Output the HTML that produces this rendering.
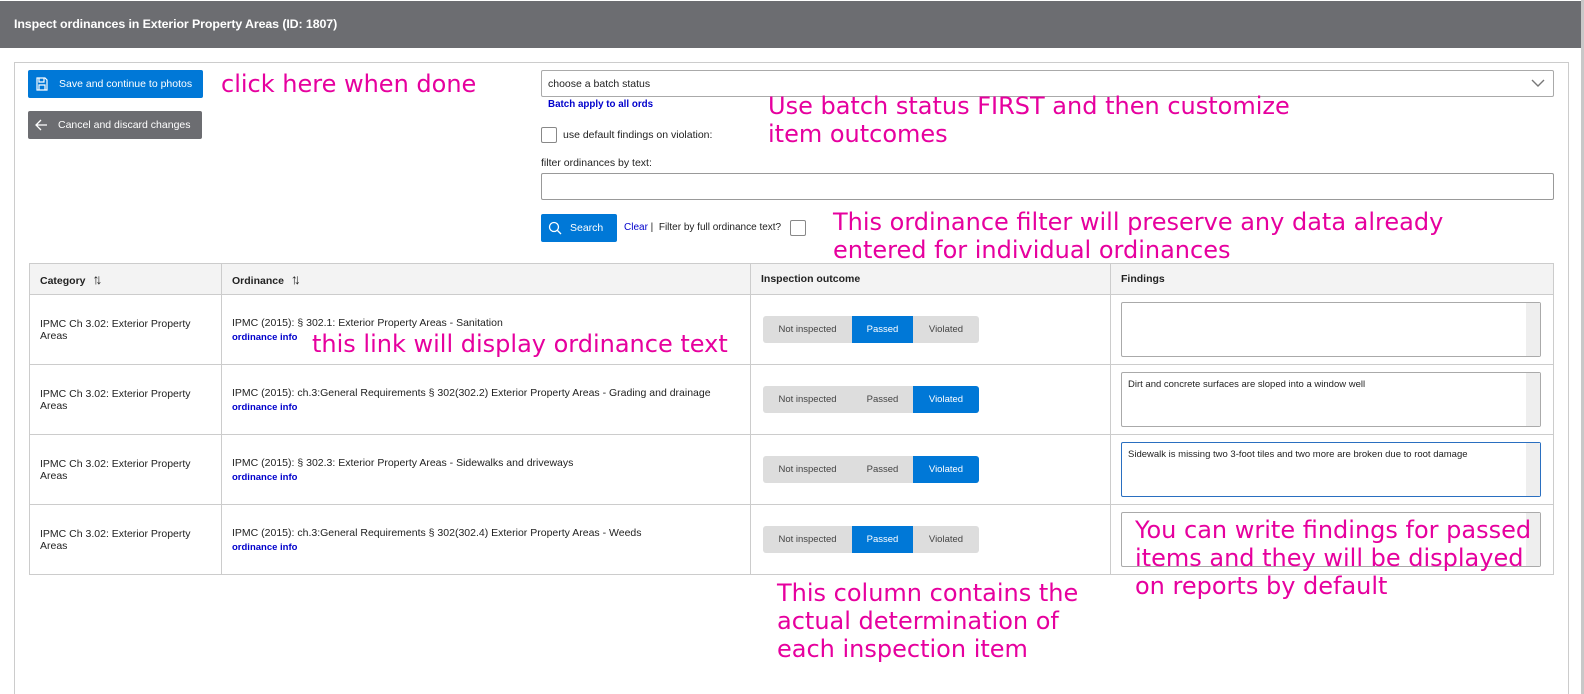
<!DOCTYPE html>
<html><head><style>
*{box-sizing:border-box;margin:0;padding:0}
html,body{overflow:hidden;width:1584px;height:694px;margin:0}
body{background:#fff;font-family:"Liberation Sans",sans-serif;font-size:10.5px;color:#222}
#w{position:relative;width:1584px;height:694px;overflow:hidden}
.abs{position:absolute}
.hdr{left:0;top:1px;width:1584px;height:47px;background:#6c6d71;color:#fff;font-size:12.4px;font-weight:bold;padding:16px 14px;letter-spacing:-0.1px}
.rb{left:1581px;top:0;width:3px;height:694px;background:#c8c8c8}
.panel{left:14px;top:62px;width:1555px;height:632px;border:1px solid #ccc;border-bottom:none}
.btn{height:28px;color:#fff;font-size:10.5px;border-radius:2px;display:flex;align-items:center}
.ann{color:#e6009e;font-family:"DejaVu Sans",sans-serif;font-size:24px;line-height:28px;white-space:nowrap}
table{border-collapse:collapse;position:absolute;left:29px;top:263px;width:1525px;table-layout:fixed}
td,th{border:1px solid #ccc;text-align:left;vertical-align:middle;padding:0 10px;font-size:10.5px}
th{background:#f3f3f3;height:31px;font-weight:bold}
th .s{font-weight:normal;font-size:14px;letter-spacing:-4px;margin-left:4px}
td{height:70px}
.link{color:#0000cc;font-weight:bold;font-size:9.5px;margin-top:3px}
.seg{display:flex;width:216px;height:27px;border-radius:3px;overflow:hidden;background:#ddd;font-size:9.5px;margin-left:2px}
.seg div{display:flex;align-items:center;justify-content:center;color:#444}
.seg .a{width:89px}.seg .b{width:61px}.seg .c{width:66px}
.seg .on{background:#0078d7;color:#fff}
.ta{width:420px;height:55px;border:1px solid #aaa;border-radius:2px;position:relative;padding:6px 6px;font-size:9.5px}
.ta:after{content:"";position:absolute;right:0;top:0;width:14px;height:100%;background:#eee}
</style></head><body><div id="w">
<div class="abs hdr">Inspect ordinances in Exterior Property Areas (ID: 1807)</div>
<div class="abs rb"></div>
<div class="abs panel"></div>
<div class="abs btn" style="left:28px;top:70px;width:175px;background:#0078d7"><svg width="14" height="14" style="margin:0 10px 0 7px" viewBox="0 0 14 14"><path d="M2 1h8l2 2v10H2z M4 1v4h5V1 M4 13V8h6v5" fill="none" stroke="#fff" stroke-width="1.2"/></svg>Save and continue to photos</div>
<div class="abs btn" style="left:28px;top:111px;width:174px;background:#6c6d71"><svg width="14" height="14" style="margin:0 10px 0 6px" viewBox="0 0 14 14"><path d="M13 7H2M7 2L2 7l5 5" fill="none" stroke="#fff" stroke-width="1.3"/></svg>Cancel and discard changes</div>
<div class="abs ann" style="left:221px;top:70px">click here when done</div>
<div class="abs" style="left:541px;top:70px;width:1013px;height:27px;border:1px solid #aaa;border-radius:2px;padding:7px 6px">choose a batch status<svg class="abs" style="right:8px;top:8px" width="14" height="9" viewBox="0 0 14 9"><path d="M1 1l6 6 6-6" fill="none" stroke="#777" stroke-width="1.4"/></svg></div>
<div class="abs" style="left:548px;top:99px;color:#0000cc;font-weight:bold;font-size:9.8px">Batch apply to all ords</div>
<div class="abs ann" style="left:768px;top:92px">Use batch status FIRST and then customize<br>item outcomes</div>
<div class="abs" style="left:541px;top:127px;width:16px;height:16px;border:1px solid #888;border-radius:2px"></div>
<div class="abs" style="left:563px;top:129px">use default findings on violation:</div>
<div class="abs" style="left:541px;top:157px">filter ordinances by text:</div>
<div class="abs" style="left:541px;top:173px;width:1013px;height:27px;border:1px solid #999;border-radius:2px"></div>
<div class="abs btn" style="left:541px;top:214px;width:76px;background:#0078d7"><svg width="14" height="14" style="margin:0 8px 0 7px" viewBox="0 0 14 14"><circle cx="6" cy="6" r="4.5" fill="none" stroke="#fff" stroke-width="1.3"/><path d="M9.5 9.5L13 13" stroke="#fff" stroke-width="1.3"/></svg>Search</div>
<div class="abs" style="left:624px;top:222px;font-size:10px"><span style="color:#0000cc">Clear</span> | &nbsp;Filter by full ordinance text?</div>
<div class="abs" style="left:790px;top:220px;width:16px;height:16px;border:1px solid #888;border-radius:2px"></div>
<div class="abs ann" style="left:833px;top:208px">This ordinance filter will preserve any data already<br>entered for individual ordinances</div>
<table>
<tr><th style="width:192px">Category <span class="s">↑↓</span></th><th style="width:529px">Ordinance <span class="s">↑↓</span></th><th style="width:360px">Inspection outcome</th><th>Findings</th></tr>
<tr><td>IPMC Ch 3.02: Exterior Property<br>Areas</td><td>IPMC (2015): § 302.1: Exterior Property Areas - Sanitation<div class="link">ordinance info</div></td><td><div class="seg"><div class="a">Not inspected</div><div class="b on">Passed</div><div class="c">Violated</div></div></td><td><div class="ta"></div></td></tr>
<tr><td>IPMC Ch 3.02: Exterior Property<br>Areas</td><td>IPMC (2015): ch.3:General Requirements § 302(302.2) Exterior Property Areas - Grading and drainage<div class="link">ordinance info</div></td><td><div class="seg"><div class="a">Not inspected</div><div class="b">Passed</div><div class="c on">Violated</div></div></td><td><div class="ta">Dirt and concrete surfaces are sloped into a window well</div></td></tr>
<tr><td>IPMC Ch 3.02: Exterior Property<br>Areas</td><td>IPMC (2015): § 302.3: Exterior Property Areas - Sidewalks and driveways<div class="link">ordinance info</div></td><td><div class="seg"><div class="a">Not inspected</div><div class="b">Passed</div><div class="c on">Violated</div></div></td><td><div class="ta" style="border:1px solid #2a6fc0">Sidewalk is missing two 3-foot tiles and two more are broken due to root damage</div></td></tr>
<tr><td>IPMC Ch 3.02: Exterior Property<br>Areas</td><td>IPMC (2015): ch.3:General Requirements § 302(302.4) Exterior Property Areas - Weeds<div class="link">ordinance info</div></td><td><div class="seg"><div class="a">Not inspected</div><div class="b on">Passed</div><div class="c">Violated</div></div></td><td><div class="ta"></div></td></tr>
</table>
<div class="abs ann" style="left:312px;top:330px">this link will display ordinance text</div>
<div class="abs ann" style="left:1135px;top:516px">You can write findings for passed<br>items and they will be displayed<br>on reports by default</div>
<div class="abs ann" style="left:777px;top:579px">This column contains the<br>actual determination of<br>each inspection item</div>
</div></body></html>
